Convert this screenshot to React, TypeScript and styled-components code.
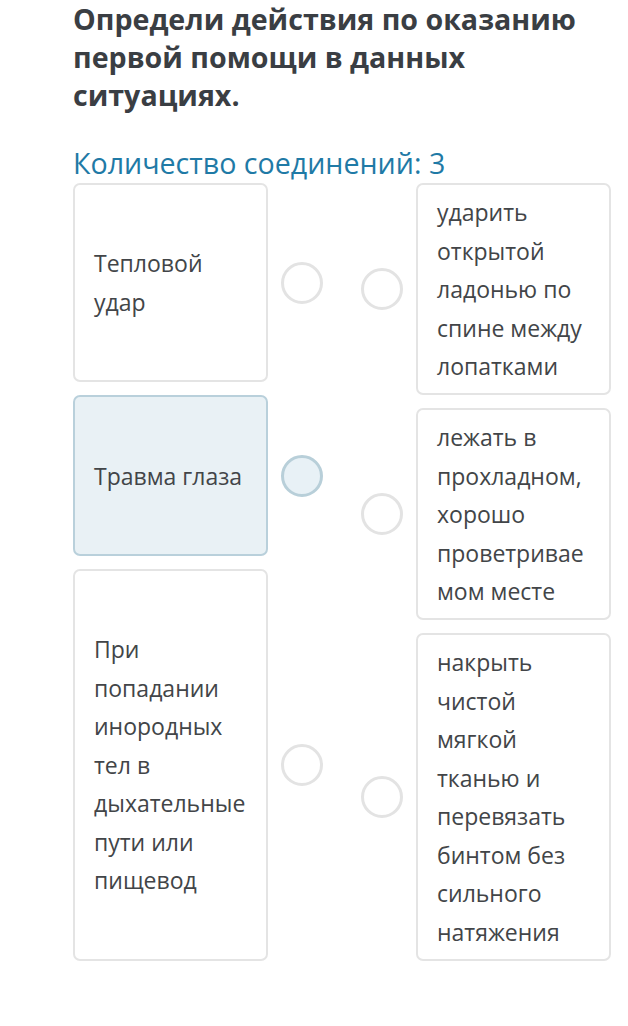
import React from "react";
import styled, { createGlobalStyle } from "styled-components";

const Global = createGlobalStyle`
  html, body { margin: 0; padding: 0; background: #ffffff; }
  body { font-family: "Open Sans", "Noto Sans", sans-serif; }
`;

const Page = styled.div`
  width: 628px;
  box-sizing: border-box;
  padding: 0 17px 40px 73px;
`;

const Title = styled.h1`
  margin: 0;
  font-size: 28.6px;
  line-height: 38px;
  font-weight: 700;
  color: #3a3e43;
`;

const Subtitle = styled.div`
  margin: 31px 0 2px;
  font-size: 28.6px;
  line-height: 36px;
  color: #1f7aa6;
`;

const Board = styled.div`
  display: grid;
  grid-template-columns: 1fr 1fr;
  column-gap: 38px;
`;

const Column = styled.div`
  display: flex;
  flex-direction: column;
  gap: 13px;
`;

const Item = styled.div<{ $side: "left" | "right" }>`
  display: flex;
  align-items: center;
  gap: 13px;
  flex: ${(p) => (p.$side === "left" ? "1 1 auto" : "0 0 auto")};
  flex-direction: ${(p) => (p.$side === "left" ? "row" : "row-reverse")};
`;

const Card = styled.div<{ $active?: boolean; $center?: boolean }>`
  flex: 1;
  align-self: stretch;
  box-sizing: border-box;
  display: flex;
  align-items: ${(p) => (p.$center ? "center" : "flex-start")};
  padding: 8px 19px 7.5px;
  border: 2px solid ${(p) => (p.$active ? "#b9d0db" : "#e4e4e4")};
  border-radius: 7px;
  background: ${(p) => (p.$active ? "#e9f1f5" : "#ffffff")};
  font-size: 23px;
  line-height: 38.5px;
  color: #424548;
  overflow-wrap: anywhere;
  min-width: 0;
`;

const Dot = styled.div<{ $active?: boolean }>`
  flex: 0 0 auto;
  width: 42px;
  height: 42px;
  box-sizing: border-box;
  border-radius: 50%;
  border: 3.5px solid ${(p) => (p.$active ? "#b8cfd9" : "#e3e3e3")};
  background: ${(p) => (p.$active ? "#e8f1f6" : "#ffffff")};
`;

const left = [
  { text: "Тепловой удар" },
  { text: "Травма глаза", active: true },
  { text: "При попадании инородных тел в дыхательные пути или пищевод" },
];

const right = [
  { text: "ударить открытой ладонью по спине между лопатками" },
  { text: "лежать в прохладном, хорошо проветриваемом месте" },
  { text: "накрыть чистой мягкой тканью и перевязать бинтом без сильного натяжения" },
];

export default function App() {
  return (
    <Page>
      <Global />
      <Title>Определи действия по оказанию первой помощи в данных ситуациях.</Title>
      <Subtitle>Количество соединений: 3</Subtitle>
      <Board>
        <Column>
          {left.map((l) => (
            <Item key={l.text} $side="left">
              <Card $center $active={l.active}>
                <span>{l.text}</span>
              </Card>
              <Dot $active={l.active} />
            </Item>
          ))}
        </Column>
        <Column>
          {right.map((r) => (
            <Item key={r.text} $side="right">
              <Card>
                <span>{r.text}</span>
              </Card>
              <Dot />
            </Item>
          ))}
        </Column>
      </Board>
    </Page>
  );
}
